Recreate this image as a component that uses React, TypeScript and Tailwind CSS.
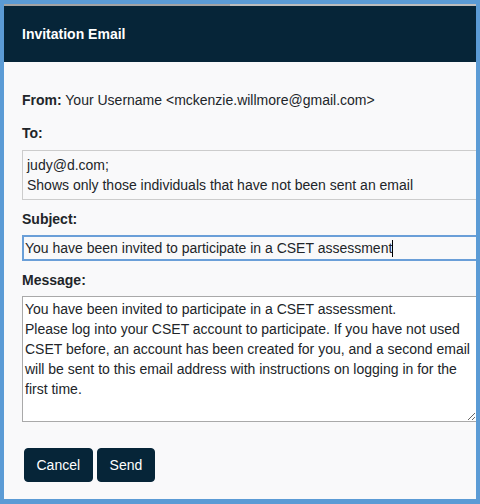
import React from 'react';

const MESSAGE =
  'You have been invited to participate in a CSET assessment.\nPlease log into your CSET account to participate. If you have not used CSET before, an account has been created for you, and a second email will be sent to this email address with instructions on logging in for the first time.';

export default function App() {
  return (
    <div
      className="w-[480px] h-[504px] bg-[#5b9bd5] pt-[4px] pl-[4px] pr-[4px] pb-[5px] text-[14px] text-[#212529]"
      style={{ fontFamily: '"Liberation Sans", Arial, sans-serif' }}
    >
      <div className="h-full flex flex-col overflow-hidden bg-[#f9f9fa]">
        {/* progress strip */}
        <div className="flex h-[2px] shrink-0">
          <div className="w-[226px] bg-[#a3a3a3]" />
          <div className="flex-1 bg-[#bdbdbd]" />
        </div>

        <header className="h-[56px] shrink-0 bg-[#062538] flex items-center pl-[18px]">
          <h1 className="text-white font-bold text-[14px] leading-5">Invitation Email</h1>
        </header>

        <div className="pl-[18px] pt-[28px]">
          <p className="leading-5 mb-[13px]">
            <span className="font-bold">From:</span> Your Username &lt;mckenzie.willmore@gmail.com&gt;
          </p>

          <label className="block font-bold leading-5 mb-[7px]">To:</label>
          <div className="w-[470px] border border-[#cccccc] pl-[4px] pt-[4px] pb-[4px] leading-5">
            <div>judy@d.com;</div>
            <div>Shows only those individuals that have not been sent an email</div>
          </div>

          <label className="block font-bold leading-5 mt-[9px] mb-[6px]">Subject:</label>
          <div className="w-[470px] h-[26px] border-2 border-[#6a9fd8] pl-[1px] flex items-center leading-5">
            <span>You have been invited to participate in a CSET assessment</span>
            <span className="inline-block w-px h-[17px] bg-black" />
          </div>

          <label className="block font-bold leading-5 mt-[9px] mb-[6px]">Message:</label>
          <textarea
            readOnly
            defaultValue={MESSAGE}
            className="block w-[455px] h-[126px] border border-[#a9a9a9] bg-white p-[2px] leading-5 text-[14px] text-[#212529] outline-none"
            style={{ fontFamily: '"Liberation Sans", Arial, sans-serif' }}
          />

          <div className="flex gap-[4px] mt-[26px] pl-[2px]">
            <button className="bg-[#062538] text-white rounded-[4px] px-[11.5px] py-[6px] border border-[#062538] leading-5">
              Cancel
            </button>
            <button className="bg-[#062538] text-white rounded-[4px] px-[12px] py-[6px] border border-[#062538] leading-5">
              Send
            </button>
          </div>
        </div>
      </div>
    </div>
  );
}
